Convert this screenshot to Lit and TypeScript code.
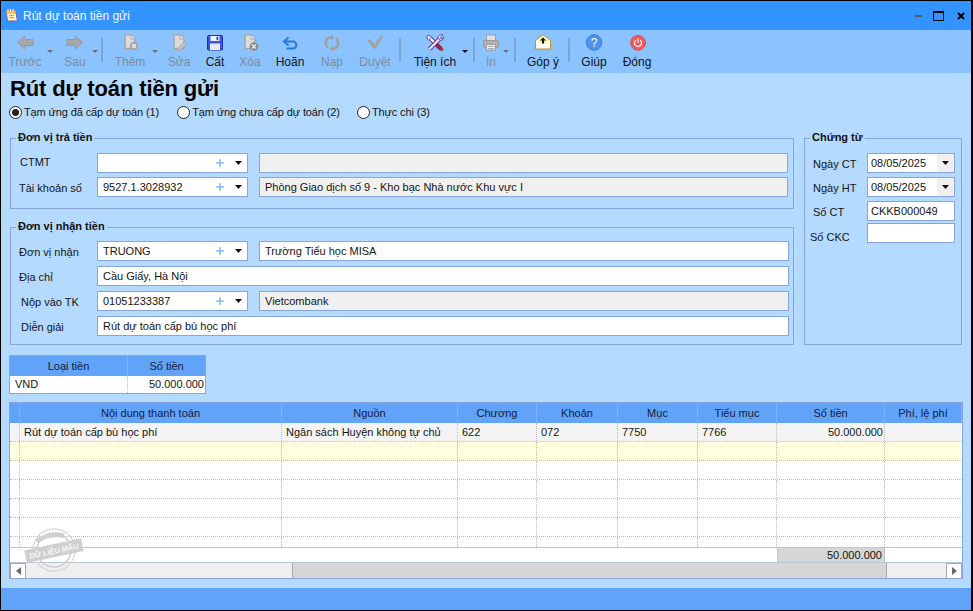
import { LitElement, html, css, svg } from "lit";
import { customElement } from "lit/decorators.js";
import { styleMap } from "lit/directives/style-map.js";

const doc = (extra: unknown) => svg`<path d="M4 .8h6.200L14 4.600V14.500H4z" fill="#dcdcdc" stroke="#a2a2a2" stroke-width="1.300"/><path d="M10 1v4h4" fill="#f4f4f4" stroke="#a2a2a2"/>${extra}`;

const ICONS: Record<string, unknown> = {
  left: svg`<path d="M1.500 8.500 8.500 2v3.500H17v6H8.500V15z" fill="#a8a8a8" stroke="#999"/>`,
  right: svg`<path d="M16.500 8.500 9.500 2v3.500H1v6h8.500V15z" fill="#a8a8a8" stroke="#999"/>`,
  add: doc(svg`<circle cx="13" cy="12" r="3.300" fill="#dcdcdc" stroke="#a2a2a2" stroke-width="1.700"/>`),
  edit: doc(svg`<path d="M8 14.500 14.500 7.500l2.200 1.800L10 16.500l-2.500.5z" fill="#c8c8c8" stroke="#9a9a9a" stroke-width=".8"/>`),
  del: doc(svg`<circle cx="13" cy="12.500" r="4.300" fill="#8a8a8a"/><path d="m11 10.500 4 4m0-4-4 4" stroke="#f4f4f4" stroke-width="1.200"/>`),
  save: svg`<rect x="1.500" y="1.500" width="15" height="14.500" rx="1" fill="#3c55e0" stroke="#1f2fb0"/><rect x="4.500" y="2" width="9" height="5" fill="#f2f6ff"/><rect x="10.500" y="2.800" width="1.800" height="3.400" fill="#2a3fc8"/><rect x="4" y="9.500" width="10" height="6.500" fill="#e6ebff"/>`,
  undo: svg`<path d="M7.500 3.500 3 7.500l4.500 4" fill="none" stroke="#2a7ad8" stroke-width="2"/><path d="M3.500 7.500H12a3.300 3.300 0 0 1 3.300 3.300v.4A3.300 3.300 0 0 1 12 14.500H5.500" fill="none" stroke="#2a7ad8" stroke-width="2"/>`,
  refresh: svg`<path d="M5 13.500A5.800 5.800 0 0 1 6.500 3.500l2-.2M13 4.500a5.800 5.800 0 0 1-1.500 10l-2 .2" fill="none" stroke="#9f9f9f" stroke-width="2.600"/><path d="m8 .8 3.500 2.700L8 6.500zM10 17.200l-3.500-2.700 3.500-3z" fill="#9f9f9f"/>`,
  check: svg`<path d="M1 6.500 4 5l5 5L16 1l1.500 1L9 15.500z" fill="#a2a2a2"/>`,
  tools: svg`<g fill="none"><path d="M4 4l11 11" stroke="#5a3aa8" stroke-width="4.200"/><path d="M4 4l6 6" stroke="#fff" stroke-width="2.200"/><path d="M14.500 4 3.500 15" stroke="#5a3aa8" stroke-width="4.200"/><path d="M14.500 4 3.500 15" stroke="#f2ecff" stroke-width="2.200"/></g><path d="M1.500 1.500c-1 1.500-.6 3.700 1 4.800l3-3C4.500 2 3.500 1 1.500 1.500z" fill="#f2ecff" stroke="#5a3aa8"/><path d="M16.800 1 14.200 3.500l.5 1 1 .5 2.300-2.500c0 2.500-1.500 4-3.800 3.800L12 3.700C12 1.500 14.500 0 16.800 1z" fill="#f2ecff" stroke="#5a3aa8" stroke-width=".9"/><path d="m10.500 10.800 1-1 5.300 5c.5 1-.8 2.300-1.800 1.800z" fill="#d8242c" stroke="#8d1018" stroke-width=".7"/>`,
  print: svg`<rect x="4.500" y="1" width="9" height="5.500" fill="#e2e2e2" stroke="#9c9c9c"/><rect x="1.500" y="6.500" width="15" height="7" rx="1" fill="#b2b2b2" stroke="#989898"/><rect x="4.500" y="10.500" width="9" height="5.500" fill="#eeeeee" stroke="#9c9c9c"/><path d="M6 12.500h6M6 14.500h6" stroke="#b0b0b0"/>`,
  mail: svg`<path d="M1.500 6.500 9 .8l7.500 5.700v8.500h-15z" fill="#fff" stroke="#bb9028"/><path d="M3 6.500 9 2.300l6 4.200L9 11z" fill="#fff2a8"/><path d="m9 3.500 3 3h-2v3H8v-3H6z" fill="#111"/>`,
  help: svg`<circle cx="9" cy="8.500" r="7.800" fill="#4c93ec" stroke="#3b7fd6"/><text x="9" y="13" text-anchor="middle" font-family="Liberation Sans" font-size="12" fill="#fff">?</text>`,
  power: svg`<circle cx="10" cy="8.800" r="7.400" fill="#ee5b60" stroke="#e04a50"/><path d="M7.800 6.200a3.500 3.500 0 1 0 4.400 0M10 4.500v4.300" fill="none" stroke="#fff" stroke-width="1.100"/>`,
};

interface Tool { k: "btn" | "caret" | "sep"; m: number; w?: number; label?: string; icon?: string; off?: boolean; dark?: boolean }
const TOOLS: Tool[] = [
  { k: "btn", m: 0, w: 40, label: "Trước", icon: "left", off: true },
  { k: "caret", m: 0 },
  { k: "btn", m: 5, w: 30, label: "Sau", icon: "right", off: true },
  { k: "caret", m: 0 },
  { k: "sep", m: 1 },
  { k: "btn", m: 12, w: 30, label: "Thêm", icon: "add", off: true },
  { k: "caret", m: 5 },
  { k: "btn", m: 4, w: 30, label: "Sửa", icon: "edit", off: true },
  { k: "btn", m: 6, w: 30, label: "Cất", icon: "save" },
  { k: "btn", m: 5, w: 30, label: "Xóa", icon: "del", off: true },
  { k: "btn", m: 10, w: 30, label: "Hoãn", icon: "undo" },
  { k: "btn", m: 12, w: 30, label: "Nạp", icon: "refresh", off: true },
  { k: "btn", m: 13, w: 30, label: "Duyệt", icon: "check", off: true },
  { k: "sep", m: 9 },
  { k: "btn", m: 12, w: 44, label: "Tiện ích", icon: "tools" },
  { k: "caret", m: 3, dark: true },
  { k: "sep", m: 3 },
  { k: "btn", m: 6, w: 20, label: "In", icon: "print", off: true },
  { k: "caret", m: 0 },
  { k: "sep", m: 3 },
  { k: "btn", m: 7, w: 40, label: "Góp ý", icon: "mail" },
  { k: "sep", m: 5 },
  { k: "btn", m: 4, w: 40, label: "Giúp", icon: "help" },
  { k: "btn", m: 3, w: 40, label: "Đóng", icon: "power" },
];

const caret = html`<svg class="dd" width="7" height="4" viewBox="0 0 7 4"><path d="M0 0h7L3.500 4z" fill="#111"/></svg>`;

@customElement("app-root")
export class AppRoot extends LitElement {
  static styles = css`
    :host { display: block; width: 973px; height: 611px; font: 11px "Liberation Sans", Arial, sans-serif; color: #141414; }
    * { box-sizing: border-box; }
    .win { width: 973px; height: 611px; border: 1px solid #000; border-right-width: 2px; display: flex; flex-direction: column; background: #b5daff; overflow: hidden; }
    .title { height: 29px; flex: none; background: #3393ff; display: flex; align-items: center; padding-left: 3px; color: #f4f9ff; font-size: 12px; }
    .title .app { margin-right: 4px; }
    .title .name { flex: 1; }
    .wb { display: flex; align-items: center; margin-right: 6px; }
    .min { width: 7px; height: 2px; background: #5a5a6a; margin-right: 11px; }
    .max { width: 11px; height: 10px; border: 1px solid #000; border-top-width: 2px; margin-right: 13px; }
    .tb { height: 43px; flex: none; background: #8ac3ff; display: flex; padding-left: 4px; font-size: 12px; }
    .tool { display: flex; flex-direction: column; align-items: center; flex: none; white-space: nowrap; }
    .tool svg { margin-top: 4px; height: 18px; flex: none; }
    .tool span { margin-top: 2px; line-height: 16px; }
    .tool.off { color: #7f8c9a; }
    .cr { width: 10px; flex: none; display: flex; justify-content: center; padding-top: 20px; }
    .cr i { width: 0; height: 0; border: 3px solid transparent; border-top-color: #6e6e6e; border-bottom-width: 0; display: block; }
    .cr.dark i { border-top-color: #111; }
    .sp { width: 2px; height: 24px; margin-top: 8px; background: #7aa5d3; flex: none; }
    .main { flex: 1; display: flex; flex-direction: column; padding: 0 0 0 8px; min-height: 0; }
    h1 { margin: 2px 0 0 1px; font-size: 22px; letter-spacing: -0.13px; line-height: 28px; font-weight: bold; color: #000; }
    .radios { display: flex; height: 16px; margin-top: 1px; align-items: center; white-space: nowrap; letter-spacing: -0.12px; }
    .rad { display: flex; align-items: center; gap: 2px; }
    .rad b { width: 13px; height: 13px; border-radius: 50%; border: 1px solid #222; background: #fff; display: flex; align-items: center; justify-content: center; }
    .rad b.on::after { content: ""; width: 7px; height: 7px; border-radius: 50%; background: #222; }
    .r2 { margin-left: 18px; }
    .r3 { margin-left: 17px; }
    .forms { display: flex; gap: 10px; margin: 18px 0 0 1px; }
    .left { width: 784px; display: flex; flex-direction: column; gap: 18px; }
    .grp { position: relative; border: 1px solid #86a4de; }
    .grp > em { position: absolute; top: -9px; left: 5px; background: #b5daff; padding: 0 2px; font-style: normal; font-weight: bold; line-height: 15px; color: #111; }
    .g1 { height: 71px; padding: 14px 5px 0 0; }
    .g2 { height: 118px; padding: 13px 4px 0 0; }
    .g3 { width: 158px; height: 207px; padding: 14px 6px 0 0; }
    .row { display: grid; grid-template-columns: 86px 151px 541px; height: 20px; align-items: center; }
    .g1 .row + .row { margin-top: 4px; }
    .g2 .row + .row { margin-top: 5px; }
    .row label { padding-left: 8px; padding-top: 1px; white-space: nowrap; }
    .row label.in1 { padding-left: 10px; }
    .row label.up { padding-left: 9px; padding-top: 0; padding-bottom: 3px; }
    .row .f2 { margin-left: 11px; }
    .g1 .row { grid-template-columns: 86px 151px 1fr; }
    .f { height: 20px; border: 1px solid #86a4de; background: #fff; padding-left: 5px; line-height: 18px; display: flex; align-items: center; white-space: nowrap; overflow: hidden; }
    .f.ro { background: #f0f0f0; }
    .f .v { flex: 1; }
    .plus { margin-right: 11px; }
    .plus svg, .dd { display: block; }
    .arrow { margin-right: 5px; }
    .wide { grid-column: 2 / 4; }
    .g3 .r { display: grid; grid-template-columns: 62px 88px; align-items: center; height: 20px; }
    .g3 .r label { padding-left: 8px; padding-top: 1px; white-space: nowrap; }
    .g3 .r label.sh { padding-left: 5px; padding-top: 8px; }
    .g3 .r + .r { margin-top: 4px; }
    .g3 .r + .r.tight { margin-top: 2px; }
    .g3 .f { padding-left: 3px; }
    .dbtn { width: 17px; height: 18px; background: #f0f0f0; display: flex; align-items: center; justify-content: center; flex: none; }
    .mini { width: 197px; margin-top: 10px; border: 1px solid #86a4de; height: 39px; background: #fff; flex: none; }
    .mini .h, .mini .d { display: grid; grid-template-columns: 117px 78px; }
    .mini .h { height: 20px; background: #60a3f9; line-height: 20px; text-align: center; color: #142038; }
    .mini .h div + div { border-left: 1px solid #7fb5f8; }
    .mini .d { height: 17px; line-height: 17px; }
    .mini .d div:first-child { padding-left: 5px; }
    .mini .d div + div { border-left: 1px dotted #bbb; text-align: right; padding-right: 1px; }
    .grid { position: relative; width: 954px; height: 177px; margin-top: 8px; border: 1px solid #86a4de; background: #fff; flex: none; overflow: hidden; }
    .gr { display: grid; grid-template-columns: 10px 262px 176px 79px 81px 80px 79px 108px 77px; height: 19px; line-height: 18px; border-bottom: 1px dotted #bbb; }
    .gr > div { border-right: 1px dotted #bbb; overflow: hidden; white-space: nowrap; padding: 0 4px; }
    .gr > div:last-child { border-right: none; }
    .gr.hd { background: #60a3f9; height: 20px; border-bottom: none; line-height: 20px; color: #142038; text-align: center; }
    .gr.hd > div { border-right: 1px solid #7fb5f8; }
    .gr.cur { background: #f4f4f4; }
    .gr.new { background: #ffffe0; }
    .num { text-align: right; padding-right: 1px !important; }
    .gr.stub { height: 10px; border-bottom: none; }
    .ft { display: grid; grid-template-columns: 767px 108px 1fr; border-top: 1px solid #b8c8da; border-bottom: 1px solid #b8c8da; box-sizing: content-box; height: 14px; line-height: 14px; }
    .ft .s { background: #d6d6d6; text-align: right; padding-right: 2px; border-left: 1px solid #b8c8da; border-right: 1px solid #b8c8da; }
    .sb { display: flex; height: 17px; background: #efefef; border-bottom: 1px solid #a8a8a8; }
    .sbb { width: 16px; height: 16px; background: #fff; border: 1px solid #a8a8a8; flex: none; display: flex; align-items: center; justify-content: center; }
    .thumb { margin-left: 266px; width: 595px; background: #d6d6d6; border: 1px solid #a8a8a8; border-top: none; }
    .sbg { flex: 1; }
    .stamp { position: absolute; left: 14px; top: 121px; }
    .status { height: 22px; flex: none; background: #60a3f9; }
  `;

  private field(v: string, combo = false, date = false) {
    return html`<div class="f"><span class="v">${v}</span>${combo ? html`<span class="plus"><svg width="8" height="8" viewBox="0 0 8 8"><path d="M4 0v8M0 4h8" stroke="#4a9fe6"/></svg></span><svg class="dd arrow" width="7" height="4" viewBox="0 0 7 4"><path d="M0 0h7L3.500 4z" fill="#111"/></svg>` : ""}${date ? html`<span class="dbtn">${caret}</span>` : ""}</div>`;
  }

  private row(cells: string[], cls = "") {
    return html`<div class="gr ${cls}"><div></div>${cells.map((c, i) => html`<div class=${i === 6 ? "num" : ""}>${c}</div>`)}</div>`;
  }

  render() {
    const blank = ["", "", "", "", "", "", "", ""];
    return html`<div class="win">
      <div class="title">
        <svg class="app" width="15" height="15" viewBox="0 0 15 15"><path d="M2 2.500h9.500L13.500 13H3.500z" fill="#fff4b8" stroke="#7a5cc0"/><path d="M2.500 2.500h9v3h-9z" fill="#e8b93c"/><path d="M4 1v3M6.500 1v3M9 1v3" stroke="#f4f4f4"/><path d="M5 7.500h5M5 9.500h5" stroke="#a8a8a8"/></svg>
        <span class="name">Rút dự toán tiền gửi</span>
        <div class="wb">
          <i class="min"></i><i class="max"></i>
          <svg width="8" height="8" viewBox="0 0 8 8"><path d="m1 1 6 6m0-6-6 6" stroke="#000" stroke-width="2"/></svg>
        </div>
      </div>
      <div class="tb">
        ${TOOLS.map((t) => t.k === "btn"
          ? html`<div class="tool ${t.off ? "off" : ""}" style=${styleMap({ width: t.w + "px", marginLeft: t.m + "px" })}><svg width="18" height="18" viewBox="0 0 18 18">${ICONS[t.icon!]}</svg><span>${t.label}</span></div>`
          : t.k === "caret"
            ? html`<div class="cr ${t.dark ? "dark" : ""}" style=${styleMap({ marginLeft: t.m + "px" })}><i></i></div>`
            : html`<div class="sp" style=${styleMap({ marginLeft: t.m + "px" })}></div>`)}
      </div>
      <div class="main">
        <h1>Rút dự toán tiền gửi</h1>
        <div class="radios">
          <div class="rad"><b class="on"></b>Tạm ứng đã cấp dự toán (1)</div>
          <div class="rad r2"><b></b>Tạm ứng chưa cấp dự toán (2)</div>
          <div class="rad r3"><b></b>Thực chi (3)</div>
        </div>
        <div class="forms">
          <div class="left">
            <div class="grp g1"><em>Đơn vị trả tiền</em>
              <div class="row"><label class="up">CTMT</label>${this.field("", true)}<div class="f ro f2"></div></div>
              <div class="row"><label>Tài khoản số</label>${this.field("9527.1.3028932", true)}<div class="f ro f2">Phòng Giao dịch số 9 - Kho bạc Nhà nước Khu vực I</div></div>
            </div>
            <div class="grp g2"><em>Đơn vị nhận tiền</em>
              <div class="row"><label>Đơn vị nhận</label>${this.field("TRUONG", true)}<div class="f f2">Trường Tiểu học MISA</div></div>
              <div class="row"><label>Địa chỉ</label><div class="f wide">Cầu Giấy, Hà Nội</div></div>
              <div class="row"><label class="in1">Nộp vào TK</label>${this.field("01051233387", true)}<div class="f ro f2">Vietcombank</div></div>
              <div class="row"><label class="in1">Diễn giải</label><div class="f wide">Rút dự toán cấp bù học phí</div></div>
            </div>
          </div>
          <div class="grp g3"><em>Chứng từ</em>
            <div class="r"><label>Ngày CT</label>${this.field("08/05/2025", false, true)}</div>
            <div class="r"><label>Ngày HT</label>${this.field("08/05/2025", false, true)}</div>
            <div class="r"><label>Số CT</label>${this.field("CKKB000049")}</div>
            <div class="r tight"><label class="sh">Số CKC</label>${this.field("")}</div>
          </div>
        </div>
        <div class="mini">
          <div class="h"><div>Loại tiền</div><div>Số tiền</div></div>
          <div class="d"><div>VND</div><div>50.000.000</div></div>
        </div>
        <div class="grid">
          <div class="gr hd"><div></div><div>Nội dung thanh toán</div><div>Nguồn</div><div>Chương</div><div>Khoản</div><div>Mục</div><div>Tiểu mục</div><div>Số tiền</div><div>Phí, lệ phí</div></div>
          ${this.row(["Rút dự toán cấp bù học phí", "Ngân sách Huyện không tự chủ", "622", "072", "7750", "7766", "50.000.000", ""], "cur")}
          ${this.row(blank, "new")}
          ${this.row(blank)}${this.row(blank)}${this.row(blank)}${this.row(blank)}
          ${this.row(blank, "stub")}
          <div class="ft"><div></div><div class="s">50.000.000</div><div></div></div>
          <div class="sb">
            <div class="sbb"><svg width="5" height="8" viewBox="0 0 5 8"><path d="M5 0v8L0 4z" fill="#666"/></svg></div>
            <div class="thumb"></div><div class="sbg"></div>
            <div class="sbb"><svg width="5" height="8" viewBox="0 0 5 8"><path d="M0 0v8l5-4z" fill="#666"/></svg></div>
          </div>
          <svg class="stamp" width="62" height="54" viewBox="0 0 62 54">
            <g fill="none" stroke="#cfcfcf" stroke-width="1.600" transform="translate(30 26)">
              <circle r="21" stroke-dasharray="2 1"/><circle r="17"/>
            </g>
            <g transform="rotate(-12 31 27)">
              <path d="M14 12q16-7 30 0l-2 4q-14-6-26 0z" fill="#d0d0d0"/>
              <rect x="1" y="20" width="58" height="13" fill="#cfcfcf"/>
              <text x="30" y="29.500" text-anchor="middle" font-family="Liberation Sans" font-size="7.500" font-weight="bold" fill="#f6f6f6">DỮ LIỆU MẪU</text>
            </g>
          </svg>
        </div>
      </div>
      <div class="status"></div>
    </div>`;
  }
}
